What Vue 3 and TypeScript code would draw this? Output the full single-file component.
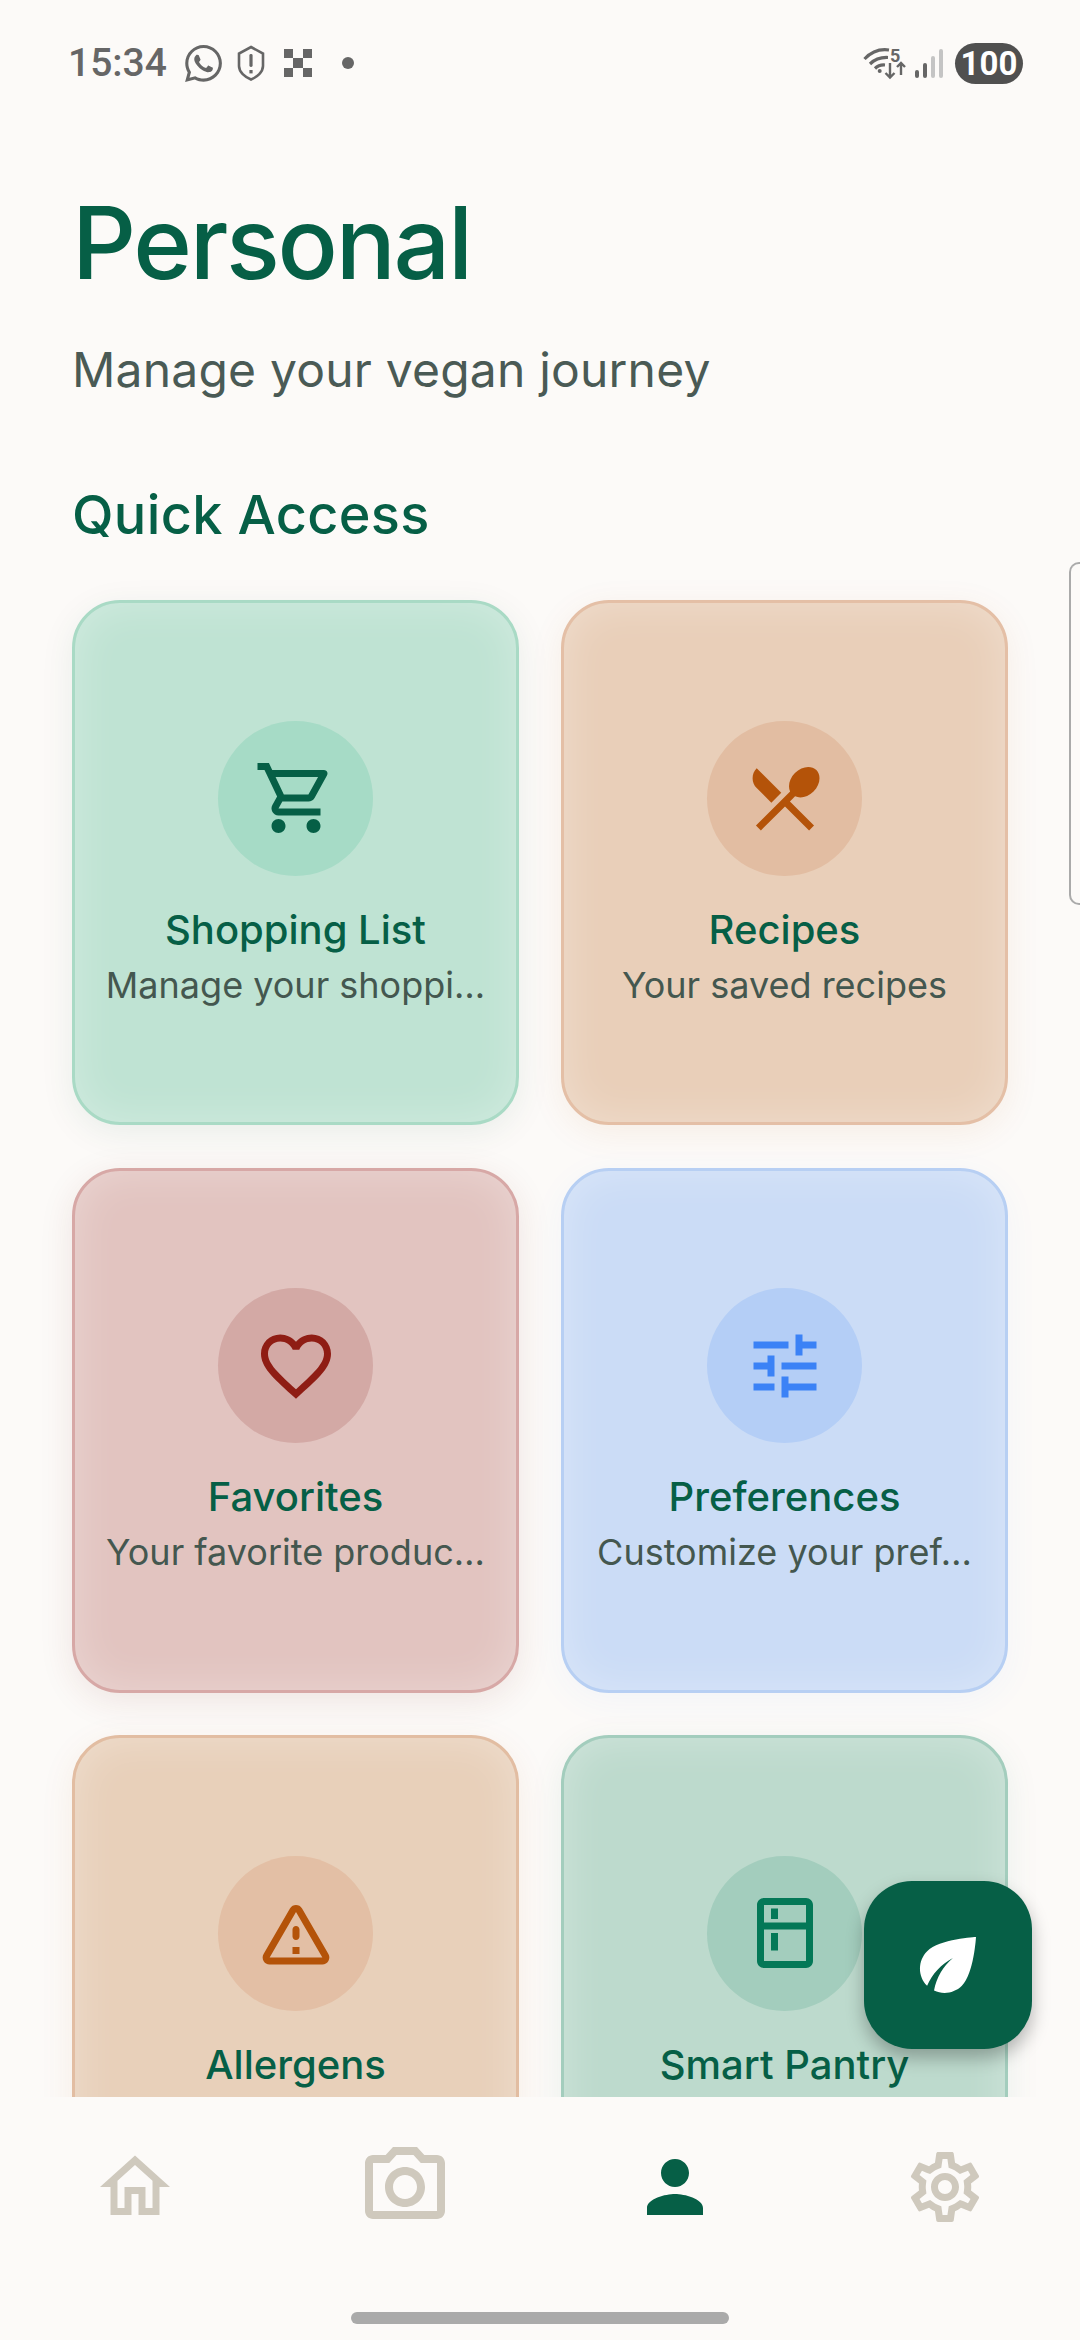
<template>
  <div class="screen">
    <div class="status">
      <div class="status-left">
        <span class="time">15:34</span>
        <svg class="ic-wa" viewBox="2 2 20 20"><path :d="whatsappPath" /></svg>
        <svg class="ic-shield" viewBox="0 0 28 36">
          <path d="M14 2 26 8.5V21C26 27 20 32 14 34.5 8 32 2 27 2 21V8.5Z" fill="none" stroke-width="2.6" />
          <rect x="12.4" y="9" width="3.2" height="13" rx="1.4" />
          <rect x="12.4" y="25" width="3.2" height="3.4" />
        </svg>
        <div class="checker"><i></i><b></b><i></i><b></b><i></i><b></b><i></i><b></b><i></i></div>
        <span class="dot"></span>
      </div>
      <div class="status-right">
        <svg class="ic-wifi" viewBox="0 0 43 30">
          <g fill="none" stroke="#666" stroke-width="3.2">
            <path d="M1.5 11Q12 0 26 2" />
            <path d="M7 16Q14 9 25 9.5" />
            <path d="M12 20.5Q16 16.5 22 17" />
          </g>
          <circle cx="16.7" cy="23" r="2" />
          <text x="27" y="14" class="wifi-5">5</text>
          <g fill="none" stroke="#666" stroke-width="2.4">
            <path d="M27 15V29M22.5 25 27 29.5 31.5 25" />
            <path d="M38 27V15M34 19 38 15 42 19" />
          </g>
        </svg>
        <div class="bars">
          <span v-for="b in signalBars" :key="b.h" class="bar" :class="{ off: b.off }" :style="{ height: b.h + 'px' }"></span>
        </div>
        <div class="battery">100</div>
      </div>
    </div>

    <main class="content">
      <h1>Personal</h1>
      <p class="lead">Manage your vegan journey</p>
      <h2>Quick Access</h2>
      <div class="grid">
        <div v-for="c in cards" :key="c.title" class="card" :class="c.tone">
          <div class="circle">
            <svg class="icon" viewBox="0 0 24 24"><path :d="c.icon" /></svg>
          </div>
          <div class="card-title">{{ c.title }}</div>
          <div class="card-sub">{{ c.sub }}</div>
        </div>
      </div>
    </main>

    <div class="edge-handle"></div>

    <button class="fab">
      <svg viewBox="0 0 24 24"><path d="M6.05 8.05c-2.73 2.73-2.73 7.15-.02 9.88 1.47-3.4 4.09-6.24 7.37-7.93-2.78 2.34-4.73 5.61-5.39 9.32 2.6 1.23 5.8.78 7.95-1.37C19.43 14.47 20 4 20 4S9.53 4.57 6.05 8.05z" /></svg>
    </button>

    <nav class="nav">
      <div class="tabs">
        <div v-for="t in tabs" :key="t.name" class="tab" :class="{ active: t.active }">
          <svg :class="t.name" viewBox="0 0 24 24"><path :d="t.icon" /></svg>
        </div>
      </div>
      <div class="home-bar"></div>
    </nav>
  </div>
</template>

<script setup lang="ts">
const whatsappPath =
  "M12.04 2C6.58 2 2.13 6.45 2.13 11.91C2.13 13.66 2.59 15.36 3.45 16.86L2.05 22L7.3 20.62C8.75 21.41 10.38 21.83 12.04 21.83C17.5 21.83 21.95 17.38 21.95 11.92C21.95 9.27 20.92 6.78 19.05 4.91C17.18 3.03 14.69 2 12.04 2M12.05 3.67C14.25 3.67 16.31 4.53 17.87 6.09C19.42 7.65 20.28 9.72 20.28 11.92C20.28 16.46 16.58 20.15 12.04 20.15C10.56 20.15 9.11 19.76 7.85 19L7.55 18.83L4.43 19.65L5.26 16.61L5.06 16.29C4.24 15 3.8 13.47 3.8 11.91C3.81 7.37 7.5 3.67 12.05 3.67M8.53 7.33C8.37 7.33 8.1 7.39 7.87 7.64C7.65 7.89 7 8.5 7 9.71C7 10.93 7.89 12.1 8 12.27C8.14 12.44 9.76 14.94 12.25 16C12.84 16.27 13.3 16.42 13.66 16.53C14.25 16.72 14.79 16.69 15.22 16.63C15.7 16.56 16.68 16.03 16.89 15.45C17.1 14.87 17.1 14.38 17.04 14.27C16.97 14.17 16.81 14.11 16.56 14C16.31 13.86 15.09 13.26 14.87 13.18C14.64 13.1 14.5 13.06 14.31 13.3C14.15 13.55 13.67 14.11 13.53 14.27C13.38 14.44 13.24 14.46 13 14.34C12.74 14.21 11.94 13.95 11 13.11C10.26 12.45 9.77 11.64 9.62 11.39C9.5 11.15 9.61 11 9.73 10.89C9.84 10.78 10 10.6 10.1 10.45C10.23 10.31 10.27 10.2 10.35 10.04C10.43 9.87 10.39 9.73 10.33 9.61C10.27 9.5 9.77 8.26 9.56 7.77C9.36 7.29 9.16 7.35 9 7.34C8.86 7.34 8.7 7.33 8.53 7.33Z";

const signalBars = [
  { h: 8, off: false },
  { h: 15, off: false },
  { h: 22, off: true },
  { h: 29, off: true },
];

const cards = [
  {
    title: "Shopping List",
    sub: "Manage your shoppi…",
    tone: "mint",
    icon: "M15.55 13c.75 0 1.41-.41 1.75-1.03l3.58-6.49c.37-.66-.11-1.48-.87-1.48H5.21l-.94-2H1v2h2l3.6 7.59-1.35 2.44C4.52 15.37 5.48 17 7 17h12v-2H7l1.1-2h7.45zM6.16 6h12.15l-2.76 5H8.53L6.16 6zM7 18c-1.1 0-1.99.9-1.99 2S5.9 22 7 22s2-.9 2-2-.9-2-2-2zm10 0c-1.1 0-1.99.9-1.99 2s.89 2 1.99 2 2-.9 2-2-.9-2-2-2z",
  },
  {
    title: "Recipes",
    sub: "Your saved recipes",
    tone: "peach",
    icon: "M8.1 13.34l2.83-2.83L3.91 3.5c-1.56 1.56-1.56 4.09 0 5.66l4.19 4.18zm6.78-1.81c1.53.71 3.68.21 5.27-1.38 1.91-1.91 2.28-4.65.81-6.12-1.46-1.46-4.2-1.1-6.12.81-1.59 1.59-2.09 3.74-1.38 5.27L3.7 19.87l1.41 1.41L12 14.41l6.88 6.88 1.41-1.41L13.41 13l1.47-1.47z",
  },
  {
    title: "Favorites",
    sub: "Your favorite produc…",
    tone: "rose",
    icon: "M16.5 3c-1.74 0-3.41.81-4.5 2.09C10.91 3.81 9.24 3 7.5 3 4.42 3 2 5.42 2 8.5c0 3.78 3.4 6.86 8.55 11.54L12 21.35l1.45-1.32C18.6 15.36 22 12.28 22 8.5 22 5.42 19.58 3 16.5 3zm-4.4 15.55l-.1.1-.1-.1C7.14 14.24 4 11.39 4 8.5 4 6.5 5.5 5 7.5 5c1.54 0 3.04.99 3.57 2.36h1.87C13.46 5.99 14.96 5 16.5 5c2 0 3.5 1.5 3.5 3.5 0 2.89-3.14 5.74-7.9 10.05z",
  },
  {
    title: "Preferences",
    sub: "Customize your pref…",
    tone: "sky",
    icon: "M3 17v2h6v-2H3zM3 5v2h10V5H3zm10 16v-2h8v-2h-8v-2h-2v6h2zM7 9v2H3v2h4v2h2V9H7zm14 4v-2H11v2h10zm-6-4h2V7h4V5h-4V3h-2v6z",
  },
  {
    title: "Allergens",
    sub: "",
    tone: "sand",
    icon: "M12 5.99L19.53 19H4.47L12 5.99M2.74 18c-.77 1.33.19 3 1.73 3h15.06c1.54 0 2.5-1.67 1.73-3L13.73 4.99c-.77-1.33-2.69-1.33-3.46 0L2.74 18zM11 11v2c0 .55.45 1 1 1s1-.45 1-1v-2c0-.55-.45-1-1-1s-1 .45-1 1zm0 5h2v2h-2z",
  },
  {
    title: "Smart Pantry",
    sub: "",
    tone: "sage",
    icon: "M18 2.01L6 2c-1.1 0-2 .89-2 2v16c0 1.1.9 2 2 2h12c1.1 0 2-.9 2-2V4c0-1.11-.9-1.99-2-1.99zM18 20H6v-9.02h12V20zm0-11H6V4h12v5zM8 5h2v3H8zm0 7h2v5H8z",
  },
];

const tabs = [
  { name: "home", active: false, icon: "M12 5.69l5 4.5V18h-2v-6H9v6H7v-7.81l5-4.5M12 3L2 12h3v8h6v-6h2v6h6v-8h3L12 3z" },
  {
    name: "camera",
    active: false,
    icon: "M14.12 4l1.83 2H20v12H4V6h4.05l1.83-2h4.24M15 2H9L7.17 4H4c-1.1 0-2 .9-2 2v12c0 1.1.9 2 2 2h16c1.1 0 2-.9 2-2V6c0-1.1-.9-2-2-2h-3.17L15 2zm-3 7c1.65 0 3 1.35 3 3s-1.35 3-3 3-3-1.35-3-3 1.35-3 3-3m0-2c-2.76 0-5 2.24-5 5s2.24 5 5 5 5-2.24 5-5-2.24-5-5-5z",
  },
  { name: "person", active: true, icon: "M12 12c2.21 0 4-1.79 4-4s-1.79-4-4-4-4 1.79-4 4 1.79 4 4 4zm0 2c-2.67 0-8 1.34-8 4v2h16v-2c0-2.66-5.33-4-8-4z" },
  {
    name: "gear",
    active: false,
    icon: "M19.43 12.98c.04-.32.07-.64.07-.98 0-.34-.03-.66-.07-.98l2.11-1.65c.19-.15.24-.42.12-.64l-2-3.46c-.09-.16-.26-.25-.44-.25-.06 0-.12.01-.17.03l-2.49 1c-.52-.4-1.08-.73-1.69-.98l-.38-2.65C14.46 2.18 14.25 2 14 2h-4c-.25 0-.46.18-.49.42l-.38 2.65c-.61.25-1.17.59-1.69.98l-2.49-1c-.06-.02-.12-.03-.18-.03-.17 0-.34.09-.43.25l-2 3.46c-.13.22-.07.49.12.64l2.11 1.65c-.04.32-.07.65-.07.98 0 .33.03.66.07.98l-2.11 1.65c-.19.15-.24.42-.12.64l2 3.46c.09.16.26.25.44.25.06 0 .12-.01.17-.03l2.49-1c.52.4 1.08.73 1.69.98l.38 2.65c.03.24.24.42.49.42h4c.25 0 .46-.18.49-.42l.38-2.65c.61-.25 1.17-.59 1.69-.98l2.49 1c.06.02.12.03.18.03.17 0 .34-.09.43-.25l2-3.46c.12-.22.07-.49-.12-.64l-2.11-1.65zm-1.98-1.71c.04.31.05.52.05.73 0 .21-.02.43-.05.73l-.14 1.13.89.7 1.08.84-.7 1.21-1.27-.51-1.04-.42-.9.68c-.43.32-.84.56-1.25.73l-1.06.43-.16 1.13-.2 1.35h-1.4l-.19-1.35-.16-1.13-1.06-.43c-.43-.18-.83-.41-1.23-.71l-.91-.7-1.06.43-1.27.51-.7-1.21 1.08-.84.89-.7-.14-1.13c-.03-.31-.05-.54-.05-.74s.02-.43.05-.73l.14-1.13-.89-.7-1.08-.84.7-1.21 1.27.51 1.04.42.9-.68c.43-.32.84-.56 1.25-.73l1.06-.43.16-1.13.2-1.35h1.39l.19 1.35.16 1.13 1.06.43c.43.18.83.41 1.23.71l.91.7 1.06-.43 1.27-.51.7 1.21-1.07.85-.89.7.14 1.13zM12 8c-2.21 0-4 1.79-4 4s1.79 4 4 4 4-1.79 4-4-1.79-4-4-4zm0 6c-1.1 0-2-.9-2-2s.9-2 2-2 2 .9 2 2-.9 2-2 2z",
  },
];
</script>

<style>
html,
body {
  margin: 0;
  background: #fcfaf8;
}
</style>

<style scoped>
.screen {
  position: relative;
  width: 1080px;
  height: 2340px;
  display: flex;
  flex-direction: column;
  overflow: hidden;
  background: #fcfaf8;
  font-family: Inter, "Noto Sans", sans-serif;
}

/* status bar */
.status {
  flex: none;
  height: 126px;
  padding: 0 57px 0 68px;
  display: flex;
  align-items: center;
  justify-content: space-between;
  box-sizing: border-box;
  fill: #666;
  stroke: none;
}
.status-left,
.status-right {
  display: flex;
  align-items: center;
}
.time {
  font-family: Roboto, sans-serif;
  font-size: 39px;
  font-weight: 500;
  color: #666;
  width: 117px;
}
.ic-wa {
  width: 37px;
  height: 37px;
  margin-right: 15px;
}
.ic-shield {
  width: 28px;
  height: 36px;
  margin-right: 19px;
  stroke: none;
}
.ic-shield path {
  stroke: #666;
}
.checker {
  width: 28px;
  height: 28px;
  display: grid;
  grid-template-columns: repeat(3, 1fr);
  grid-template-rows: repeat(3, 1fr);
  margin-right: 30px;
}
.checker i {
  background: #666;
}
.dot {
  width: 12px;
  height: 12px;
  border-radius: 50%;
  background: #666;
}
.ic-wifi {
  width: 43px;
  height: 30px;
  margin-right: 9px;
  overflow: visible;
}
.wifi-5 {
  font-family: Roboto, sans-serif;
  font-size: 18px;
  font-weight: 700;
  fill: #666;
}
.bars {
  display: flex;
  align-items: flex-end;
  gap: 4px;
  height: 29px;
  margin-right: 12px;
}
.bar {
  width: 4px;
  border-radius: 2px;
  background: #666;
}
.bar.off {
  background: #c4c4c4;
}
.battery {
  width: 68px;
  height: 41px;
  border-radius: 21px;
  background: #505050;
  color: #fff;
  font-family: Roboto, sans-serif;
  font-size: 33px;
  font-weight: 700;
  text-align: center;
  line-height: 41px;
}

/* main */
.content {
  flex: 1;
  min-height: 0;
  overflow: hidden;
  padding: 0 72px;
}
h1 {
  margin: 55px 0 0;
  font-size: 100px;
  line-height: 124px;
  font-weight: 500;
  color: #065f46;
  letter-spacing: -2.3px;
}
.lead {
  margin: 35px 0 0;
  font-size: 48px;
  line-height: 60px;
  color: #4a5a55;
  letter-spacing: 0.2px;
}
h2 {
  margin: 80px 0 0;
  font-size: 54px;
  line-height: 70px;
  font-weight: 500;
  color: #065f46;
  letter-spacing: 0.35px;
}
.grid {
  margin-top: 50px;
  display: grid;
  grid-template-columns: 447px 447px;
  grid-auto-rows: 525px;
  gap: 42.5px 42px;
}
.card {
  box-sizing: border-box;
  border: 3px solid;
  border-radius: 48px;
  padding: 6px 26px 0;
  display: flex;
  flex-direction: column;
  align-items: center;
  justify-content: center;
  min-width: 0;
}
.circle {
  width: 155px;
  height: 155px;
  border-radius: 50%;
  display: flex;
  align-items: center;
  justify-content: center;
}
.icon {
  width: 84px;
  height: 84px;
}
.card-title {
  margin-top: 25px;
  font-size: 40px;
  line-height: 58px;
  font-weight: 500;
  color: #065f46;
  white-space: nowrap;
}
.card-sub {
  margin-top: 0;
  min-height: 52px;
  font-size: 36px;
  line-height: 52px;
  color: #44574f;
  text-align: center;
  white-space: nowrap;
}
.mint {
  background: #bfe3d3;
  border-color: #a9dac5;
  box-shadow: inset 0 0 44px rgba(255, 255, 255, 0.3), 0 8px 34px rgba(6, 95, 70, 0.08);
}
.mint .circle { background: #a6dbc6; }
.mint .icon { fill: #065f46; }
.peach {
  background: #e9cfb9;
  border-color: #e4bfa6;
  box-shadow: inset 0 0 44px rgba(255, 255, 255, 0.3), 0 8px 34px rgba(180, 83, 9, 0.08);
}
.peach .circle { background: #e2bda2; }
.peach .icon { fill: #b45309; }
.rose {
  background: #e2c4c0;
  border-color: #d7a8a6;
  box-shadow: inset 0 0 44px rgba(255, 255, 255, 0.3), 0 8px 34px rgba(120, 40, 30, 0.1);
}
.rose .circle { background: #d3a9a5; }
.rose .icon { fill: #8f1d14; }
.sky {
  background: #cbdcf6;
  border-color: #b7cff3;
  box-shadow: inset 0 0 44px rgba(255, 255, 255, 0.3), 0 8px 34px rgba(59, 130, 246, 0.05);
}
.sky .circle { background: #b4cef6; }
.sky .icon { fill: #3b82f6; }
.sand {
  background: #e8d0ba;
  border-color: #e2bda2;
  box-shadow: inset 0 0 44px rgba(255, 255, 255, 0.3), 0 8px 34px rgba(180, 83, 9, 0.08);
}
.sand .circle { background: #e3bfa5; }
.sand .icon { fill: #b45309; }
.sage {
  background: #bddacd;
  border-color: #a3cdbd;
  box-shadow: inset 0 0 44px rgba(255, 255, 255, 0.3), 0 8px 34px rgba(4, 120, 87, 0.08);
}
.sage .circle { background: #a3cdbd; }
.sage .icon { fill: #047857; }

/* overlays */
.edge-handle {
  position: absolute;
  top: 562px;
  right: 0;
  width: 11px;
  height: 343px;
  box-sizing: border-box;
  border: 2px solid #aaa;
  border-right: none;
  border-radius: 10px 0 0 10px;
}
.fab {
  position: absolute;
  left: 864px;
  top: 1881px;
  width: 168px;
  height: 168px;
  padding: 0;
  border: none;
  border-radius: 48px;
  background: #065f46;
  box-shadow: 0 9px 18px rgba(0, 0, 0, 0.28);
  display: flex;
  align-items: center;
  justify-content: center;
}
.fab svg {
  width: 84px;
  height: 84px;
  fill: #fff;
}

/* bottom nav */
.nav {
  position: relative;
  flex: none;
  height: 243px;
  background: #fcfaf8;
  display: flex;
  flex-direction: column;
  align-items: center;
}
.tabs {
  width: 100%;
  height: 180px;
  display: grid;
  grid-template-columns: repeat(4, 1fr);
}
.tab {
  display: flex;
  align-items: center;
  justify-content: center;
  fill: #cfc9bd;
}
.tab.active {
  fill: #065f46;
}
.tab svg {
  width: 84px;
  height: 84px;
}
.tab svg.camera {
  width: 96px;
  height: 96px;
}
.home-bar {
  margin-top: 35px;
  width: 378px;
  height: 12px;
  border-radius: 6px;
  background: #aaa;
}
</style>
